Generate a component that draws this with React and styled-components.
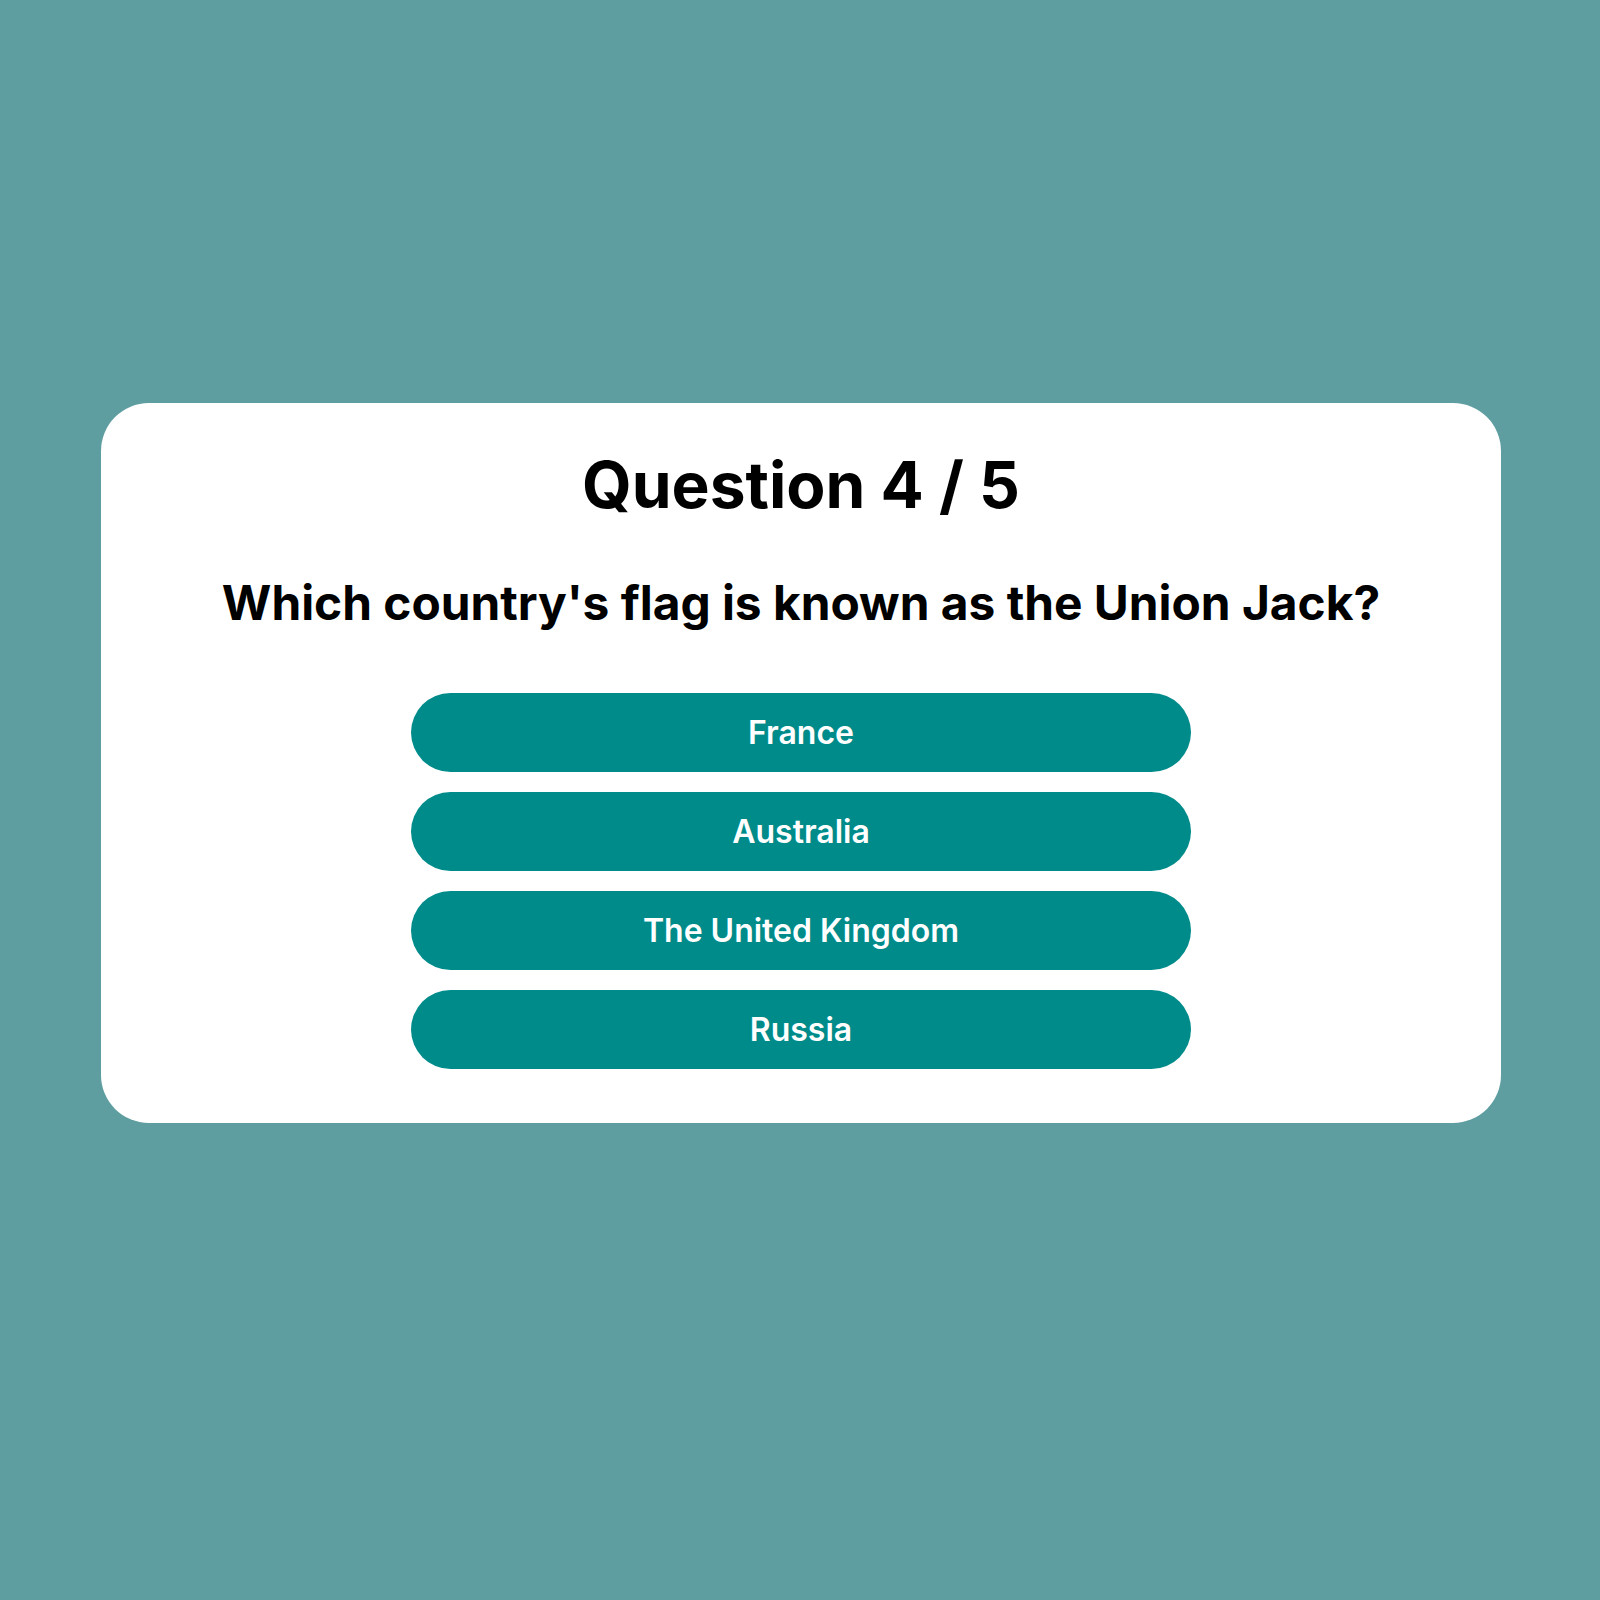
import React from 'react';
import styled, { createGlobalStyle } from 'styled-components';

const GlobalStyle = createGlobalStyle`
  body {
    margin: 0;
    background-color: #5f9ea0;
    font-family: Inter, "Noto Sans", sans-serif;
  }
`;

const Page = styled.main`
  min-height: 1600px;
  padding: 403px 0 0 2px;
  box-sizing: border-box;
`;

const Card = styled.section`
  width: 1400px;
  margin: 0 auto;
  padding: 43px 0 54px;
  background-color: #ffffff;
  border-radius: 48px;
  display: flex;
  flex-direction: column;
  align-items: center;
  box-sizing: border-box;
`;

const Counter = styled.h1`
  margin: 0 0 51px;
  font-size: 64px;
  font-weight: 700;
  color: #000;
`;

const QuestionText = styled.h2`
  margin: 0 0 60px;
  font-size: 47.8px;
  line-height: 59px;
  font-weight: 700;
  color: #000;
  text-align: center;
`;

const AnswerList = styled.div`
  display: flex;
  flex-direction: column;
  gap: 20px;
  width: 780px;
`;

const AnswerButton = styled.button`
  border: none;
  border-radius: 40px;
  padding: 20px;
  background-color: #008b8b;
  color: #ffffff;
  font-family: Inter, "Noto Sans", sans-serif;
  font-size: 32px;
  font-weight: 600;
  cursor: pointer;
`;

const answers = ['France', 'Australia', 'The United Kingdom', 'Russia'];

const App = () => {
  return (
    <>
      <GlobalStyle />
      <Page>
        <Card>
          <Counter>Question 4 / 5</Counter>
          <QuestionText>Which country's flag is known as the Union Jack?</QuestionText>
          <AnswerList>
            {answers.map((answer) => (
              <AnswerButton key={answer}>{answer}</AnswerButton>
            ))}
          </AnswerList>
        </Card>
      </Page>
    </>
  );
};

export default App;
